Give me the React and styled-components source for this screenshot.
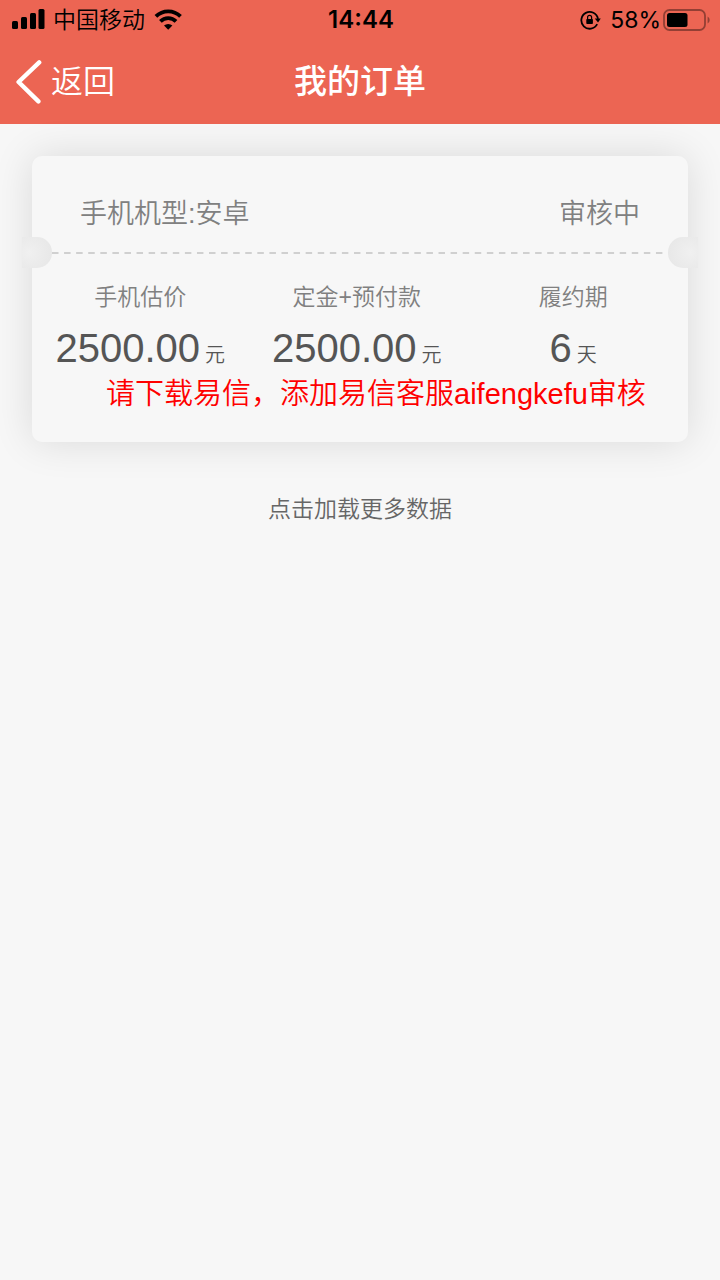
import styled, { createGlobalStyle } from "styled-components";

const GlobalStyle = createGlobalStyle`
  * {
    box-sizing: border-box;
  }
  body {
    margin: 0;
    background-color: #f7f7f7;
    font-family: "Liberation Sans", "Noto Sans CJK SC", sans-serif;
  }
`;

const Page = styled.div`
  min-height: 100vh;
`;

const Header = styled.header`
  background-color: #ec6553;
`;

const StatusBar = styled.div`
  display: grid;
  grid-template-columns: 1fr auto 1fr;
  align-items: center;
  height: 40px;
  padding: 0 10px 0 12px;
  color: #000000;
  font-family: "Inter", "Noto Sans CJK SC", sans-serif;
  font-size: 23px;
  line-height: 32px;
`;

const StatusGroup = styled.div`
  display: flex;
  align-items: center;
  justify-content: ${(props) => (props.$end ? "flex-end" : "flex-start")};
  gap: 8px;
`;

const Carrier = styled.span`
  font-weight: 350;
`;

const Clock = styled.time`
  font-size: 24px;
  font-weight: 600;
`;

const BatteryGroup = styled.span`
  display: flex;
  align-items: center;
  gap: 2px;
`;

const NavBar = styled.nav`
  display: grid;
  grid-template-columns: 1fr auto 1fr;
  align-items: center;
  height: 84px;
  padding: 0 16px;
  color: #ffffff;
`;

const BackBtn = styled.button`
  display: flex;
  align-items: center;
  justify-self: start;
  gap: 9px;
  padding: 0;
  border: none;
  background: none;
  color: inherit;
  font-family: inherit;
  font-size: 32px;
  font-weight: 350;
  line-height: 48px;
`;

const NavTitle = styled.h1`
  margin: 0;
  font-size: 33px;
  font-weight: 500;
  line-height: 48px;
`;

const Content = styled.main`
  padding: 32px;
`;

const Card = styled.section`
  padding-bottom: 33px;
  border-radius: 10px;
  background-color: #f7f7f7;
  box-shadow: 0 0 40px rgba(0, 0, 0, 0.12);
`;

const CardHead = styled.div`
  display: flex;
  justify-content: space-between;
  padding: 38px 48px 3px;
  color: #808080;
  font-size: 27px;
  line-height: 40px;
`;

const Model = styled.h2`
  margin: 0;
  font-size: inherit;
  font-weight: 350;
`;

const State = styled.span`
  font-weight: 350;
`;

const TearLine = styled.div`
  display: flex;
  align-items: center;
  margin: 0 -10px;
`;

const Notch = styled.span`
  width: 30px;
  height: 31px;
  border-radius: ${(props) =>
    props.$right ? "15px 0 0 15px" : "0 15px 15px 0"};
  background: radial-gradient(
    circle at ${(props) => (props.$right ? "75%" : "25%")} 50%,
    #f0f0f0,
    #e6e6e6
  );
`;

const Dashes = styled.span`
  flex: 1;
  height: 2px;
  background: linear-gradient(to right, #d0d0d0 50%, transparent 50%) 0 0 /
    12px 2px round;
`;

const Figures = styled.dl`
  display: flex;
  margin: 0;
  padding-top: 12px;
`;

const Figure = styled.div`
  width: 33%;
  text-align: center;
`;

const Label = styled.dt`
  color: #808080;
  font-size: 23px;
  font-weight: 350;
  line-height: 34px;
`;

const Amount = styled.dd`
  margin: 10px 0 0;
  color: #555555;
  font-size: 40px;
  line-height: 48px;
`;

const Unit = styled.small`
  margin-left: 5px;
  font-size: 20px;
  font-weight: 350;
`;

const Notice = styled.p`
  margin: 0;
  padding-left: 74px;
  color: #ff0000;
  font-size: 29px;
  font-weight: 350;
  line-height: 30px;
`;

const MoreBtn = styled.button`
  display: block;
  margin: 50px auto 0;
  padding: 0;
  border: none;
  background: none;
  color: #666666;
  font-family: inherit;
  font-size: 23px;
  font-weight: 350;
  line-height: 34px;
`;

const SignalIcon = () => (
  <svg width="33" height="22" viewBox="0 0 33 22" aria-hidden="true">
    <rect x="0" y="12" width="6" height="8" rx="1.5" />
    <rect x="9" y="8" width="6" height="12" rx="1.5" />
    <rect x="18" y="4" width="6" height="16" rx="1.5" />
    <rect x="26.5" y="0" width="6" height="20" rx="1.5" />
  </svg>
);

const WifiIcon = () => (
  <svg width="30" height="22" viewBox="0 0 30 22" aria-hidden="true">
    <g fill="none" stroke="#000000" strokeWidth="3.8">
      <path d="M2.9 7.4a17.4 17.4 0 0 1 24.6 0" />
      <path d="M7.4 12.3a11 11 0 0 1 15.6 0" />
    </g>
    <path d="M11 16.6a6 6 0 0 1 8.4 0L15.2 20.8z" />
  </svg>
);

const LockIcon = () => (
  <svg width="22" height="20" viewBox="0 0 22 20" aria-hidden="true">
    <path
      d="M17.2 14.2A8.4 8.4 0 1 1 18 8.8"
      fill="none"
      stroke="#000000"
      strokeWidth="1.8"
    />
    <path d="M14.8 8.6h6L18 12.6z" />
    <rect x="6.3" y="9" width="6.6" height="5" rx="0.8" />
    <path
      d="M7.6 9.4V7.3a2 2 0 0 1 4 0v2.1"
      fill="none"
      stroke="#000000"
      strokeWidth="1.2"
    />
  </svg>
);

const BatteryIcon = () => (
  <svg width="47" height="22" viewBox="0 0 47 22" aria-hidden="true">
    <rect
      x="1"
      y="1"
      width="41"
      height="20"
      rx="5.5"
      fill="none"
      stroke="#933f34"
      strokeWidth="1.8"
    />
    <rect x="4" y="4" width="20.5" height="14" rx="2.5" />
    <path d="M44.6 7.6a3.8 3.8 0 0 1 0 6.8z" fill="#933f34" />
  </svg>
);

const BackIcon = () => (
  <svg width="26" height="44" viewBox="0 0 26 44" aria-hidden="true">
    <path
      d="M23.2 2.4L2.6 22l19.8 19.4"
      fill="none"
      stroke="#ffffff"
      strokeWidth="4.4"
      strokeLinecap="round"
      strokeLinejoin="round"
    />
  </svg>
);

const figures = [
  { label: "手机估价", value: "2500.00", unit: "元" },
  { label: "定金+预付款", value: "2500.00", unit: "元" },
  { label: "履约期", value: "6", unit: "天" },
];

const App = () => {
  return (
    <Page>
      <GlobalStyle />
      <Header>
        <StatusBar>
          <StatusGroup>
            <SignalIcon />
            <Carrier>中国移动</Carrier>
            <WifiIcon />
          </StatusGroup>
          <Clock>14:44</Clock>
          <StatusGroup $end>
            <LockIcon />
            <BatteryGroup>
              <span>58%</span>
              <BatteryIcon />
            </BatteryGroup>
          </StatusGroup>
        </StatusBar>
        <NavBar>
          <BackBtn type="button">
            <BackIcon />
            返回
          </BackBtn>
          <NavTitle>我的订单</NavTitle>
        </NavBar>
      </Header>
      <Content>
        <Card>
          <CardHead>
            <Model>手机机型:安卓</Model>
            <State>审核中</State>
          </CardHead>
          <TearLine>
            <Notch />
            <Dashes />
            <Notch $right />
          </TearLine>
          <Figures>
            {figures.map((item) => (
              <Figure key={item.label}>
                <Label>{item.label}</Label>
                <Amount>
                  {item.value}
                  <Unit>{item.unit}</Unit>
                </Amount>
              </Figure>
            ))}
          </Figures>
          <Notice>请下载易信，添加易信客服aifengkefu审核</Notice>
        </Card>
        <MoreBtn type="button">点击加载更多数据</MoreBtn>
      </Content>
    </Page>
  );
};

export default App;
